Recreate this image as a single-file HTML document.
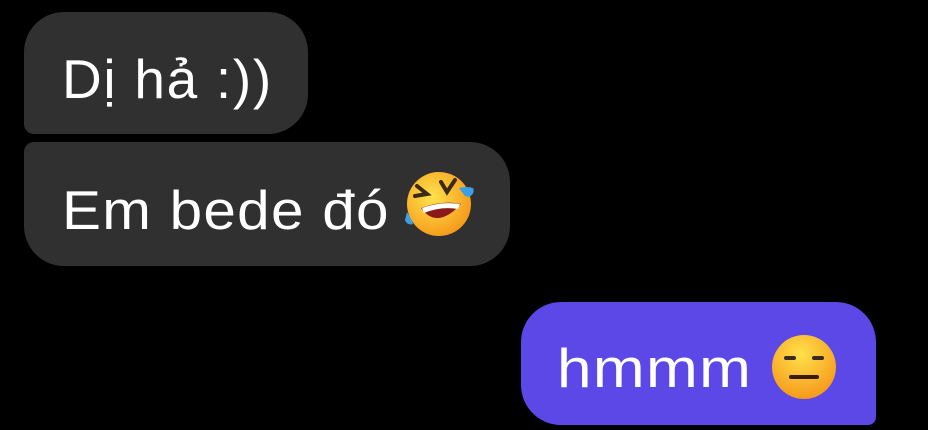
<!DOCTYPE html>
<html><head><style>
body{margin:0;width:928px;height:430px;background:#000;overflow:hidden;position:relative;font-family:"Liberation Sans",sans-serif;color:#fff}
.b{position:absolute;font-size:55px;line-height:1;box-sizing:border-box;letter-spacing:1.2px}
.b span{transform-origin:0 0;white-space:nowrap}
.g{background:#303030}
svg{position:absolute}
</style></head><body>
<div class="b g" style="left:24px;top:12px;width:284px;height:122px;border-radius:40px 40px 40px 10px;"><span style="position:absolute;left:38px;top:40px;letter-spacing:1.7px">Dị hả :))</span></div>
<div class="b g" style="left:24px;top:142px;width:486px;height:124px;border-radius:10px 40px 40px 40px;"><span style="position:absolute;left:38px;top:41px;transform:scaleX(1.062)">Em bede đó</span></div>
<svg style="left:403px;top:168px" width="72" height="72" viewBox="0 0 72 72">
<defs><radialGradient id="y" cx="45%" cy="35%" r="65%"><stop offset="0" stop-color="#ffe34d"/><stop offset="1" stop-color="#f59a1a"/></radialGradient></defs>
<circle cx="36" cy="36" r="32" fill="url(#y)" transform="rotate(-25 36 36)"/>
<path d="M18 40 Q34 62 58 36 Q40 32 18 40Z" fill="#8a1a1a"/>
<path d="M19 40 Q38 33 57 36 L55 41 Q38 38 21 45Z" fill="#fff"/>
<path d="M12 28 L24 26 L14 18 M38 14 L44 24 L52 12" stroke="#3a2a1a" stroke-width="4" fill="none" stroke-linecap="round"/>
<path d="M4 44 Q8 50 10 56 A6 6 0 0 1 2 52Z" fill="#3aa0e8"/>
<path d="M56 20 Q64 18 70 20 A6 6 0 0 1 62 28Z" fill="#3aa0e8"/>
</svg>
<div class="b" style="left:521px;top:302px;width:355px;height:123px;background:#5b48e6;border-radius:40px 40px 8px 40px;"><span style="position:absolute;left:36px;top:39px;transform:scaleX(1.13)">hmmm</span></div>
<svg style="left:770px;top:333px" width="68" height="68" viewBox="0 0 68 68">
<defs><radialGradient id="z" cx="45%" cy="30%" r="70%"><stop offset="0" stop-color="#ffe04a"/><stop offset="1" stop-color="#f69a1c"/></radialGradient></defs>
<circle cx="34" cy="34" r="32" fill="url(#z)"/>
<rect x="14" y="23" width="12" height="4" rx="2" fill="#3a2a20"/>
<rect x="42" y="23" width="12" height="4" rx="2" fill="#3a2a20"/>
<rect x="19" y="42" width="30" height="4" rx="2" fill="#3a1a10"/>
</svg>
</body></html>
